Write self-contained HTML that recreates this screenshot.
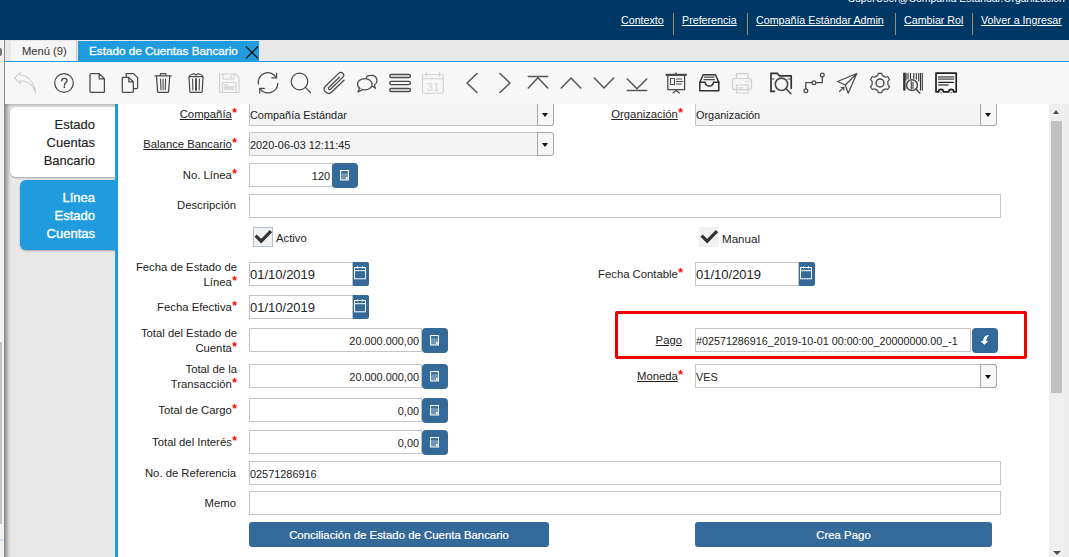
<!DOCTYPE html><html><head><meta charset="utf-8"><style>
*{box-sizing:border-box;margin:0;padding:0}
html,body{width:1069px;height:557px;overflow:hidden;background:#f2f2f2;font-family:"Liberation Sans",sans-serif;color:#333}
body>div,body>span,body>svg,.dd,.tri,.btn svg{position:absolute}
.hl{top:13px;font-size:10.7px;color:#fff;text-decoration:underline;white-space:nowrap;line-height:14px}
.hsep{top:13px;width:1px;height:22px;background:#9c8a6a}
.ic{top:73px;width:20px;height:20px;overflow:visible}
.ic *{fill:none;stroke:#444;stroke-width:1.4;stroke-linecap:round;stroke-linejoin:round}
.ic.dis *{stroke:#cfcfcf}
.lbl{font-size:11.3px;color:#222;white-space:nowrap;line-height:15px;text-align:right}
.req{color:#f00;font-weight:bold;font-size:12px;vertical-align:1px;margin-left:0.5px;line-height:0}
.lbl u{text-underline-offset:1px}
.fld{border:1px solid #c4c4c4;background:#fff;height:24px;font-size:10.9px;color:#222;line-height:24px;padding:0;white-space:nowrap;overflow:hidden}
.ro{background:#f4f4f4}
.num{text-align:right;padding-right:2px}
.btn{background:#346a99;border-radius:4px}
.pbtn{-webkit-text-stroke:0.2px #fff;background:#346a99;border-radius:3px;color:#fff;font-size:11.4px;text-align:center;line-height:27px;height:25px;white-space:nowrap}
.dd{border:1px solid #a8a8a8;background:#f6f6f6;width:17px;top:-1px;bottom:-1px;right:-1px;border-radius:0 3px 3px 0}
.tri{left:4px;width:0;height:0;border-left:3.5px solid transparent;border-right:3.5px solid transparent;border-top:4px solid #111}
.cb{width:20px;height:20px;background:#f1f1f1}
.wt{font-size:13px;line-height:18px;text-align:right;white-space:nowrap}
</style></head><body>
<div style="left:0;top:0;width:1069px;height:40px;background:#003865"></div>
<div style="left:848px;top:-8px;font-size:10.43px;color:#fff;white-space:nowrap;line-height:14px">SuperUser@Compañía Estándar.Organización</div>
<span class="hl" style="left:621px">Contexto</span>
<span class="hl" style="left:682px">Preferencia</span>
<span class="hl" style="left:756px">Compañía Estándar Admin</span>
<span class="hl" style="left:904px">Cambiar Rol</span>
<span class="hl" style="left:981px">Volver a Ingresar</span>
<div class="hsep" style="left:673px"></div>
<div class="hsep" style="left:747px"></div>
<div class="hsep" style="left:895px"></div>
<div class="hsep" style="left:972px"></div>
<div style="left:0;top:40px;width:4px;height:517px;background:#f2f2f2"></div>
<div style="left:0;top:48px;width:2px;height:8px;background:#777;border-radius:0 4px 4px 0"></div>
<div style="left:0;top:342px;width:2px;height:182px;background:#c4c4c4"></div>
<div style="left:0;top:539px;width:4px;height:2px;background:#cfe3f7"></div>
<div style="left:4px;top:40px;width:1px;height:517px;background:#8a8a8a"></div>
<div style="left:5px;top:40px;width:1064px;height:21px;background:#e8e8e8"></div>
<div style="left:11px;top:41px;width:66px;height:20px;background:#f5f5f5;border-right:1px solid #c8c8c8"></div>
<div style="left:22px;top:44px;font-size:11.2px;color:#333;white-space:nowrap;line-height:14px">Menú (9)</div>
<div style="left:78px;top:41px;width:181px;height:20px;background:#209bde"></div>
<div style="left:89px;top:44px;font-size:11.7px;color:#fff;white-space:nowrap;line-height:14px;-webkit-text-stroke:0.3px #fff">Estado de Cuentas Bancario</div>
<svg style="left:245px;top:46px" width="14" height="13" viewBox="0 0 14 13"><path d="M1 0.5L13 12.5M13 0.5L1 12.5" fill="none" stroke="#1a1a1a" stroke-width="1.3"/></svg>
<div style="left:5px;top:61px;width:1064px;height:1px;background:#209bde"></div>
<div style="left:5px;top:62px;width:1064px;height:42px;background:#f7f7f7;z-index:5"></div>
<svg style="left:0;top:0;z-index:6" width="1069" height="103" viewBox="0 0 1069 103">
<g fill="none" stroke="#4a4a4a" stroke-width="1.25" stroke-linecap="round" stroke-linejoin="round">
<!-- undo disabled -->
<path d="M20.3,72.6 L14.5,78 L20.3,83.5 L20.3,80.8 C26.5,80.5 33.5,84 35.4,93.4 C35.6,84.5 29,75.6 20.3,75.3 Z" stroke="#d0d0d0" stroke-width="1.1"/>
<!-- help -->
<circle cx="64" cy="83" r="9.3"/>
<path d="M61.7,80.8 C61.7,79.2 62.8,78.4 64.3,78.4 C65.9,78.4 67,79.4 67,80.6 C67,82.4 64.4,82.8 64.4,85.2" stroke-width="1.4"/>
<circle cx="64.4" cy="87.2" r="0.85" fill="#454545" stroke="none"/>
<!-- new -->
<path d="M90,74.5 Q90,73.6 91,73.6 L99.2,73.6 L104.4,78.8 L104.4,91.5 Q104.4,92.4 103.5,92.4 L91,92.4 Q90,92.4 90,91.5 Z M99.2,73.6 L99.2,78.8 L104.4,78.8"/>
<!-- copy -->
<path d="M126.2,76.8 L126.2,73.6 L133.5,73.6 L137.6,77.6 L137.6,87.8 Q137.6,88.5 136.8,88.5 L133.6,88.5"/>
<path d="M122.3,78.2 Q122.3,77.4 123.1,77.4 L128.8,77.4 L133.3,81.8 L133.3,91.6 Q133.3,92.4 132.5,92.4 L123.1,92.4 Q122.3,92.4 122.3,91.6 Z M128.8,77.4 L128.8,81.8 L133.3,81.8"/>
<!-- delete -->
<path d="M155,75.8 L171.2,75.8 M160.3,75.8 L160.3,74 Q160.3,73.5 160.8,73.5 L165.4,73.5 Q165.9,73.5 165.9,74 L165.9,75.8"/>
<path d="M156.5,76.5 L157.6,91.6 Q157.7,92.4 158.5,92.4 L167.7,92.4 Q168.5,92.4 168.6,91.6 L169.7,76.5"/>
<path d="M160.6,79 L160.9,89.8 M163.1,79 L163.1,89.8 M165.6,79 L165.3,89.8" stroke-width="1.1"/>
<!-- delete multiple -->
<path d="M189,77.5 Q189,75 191.5,74.5 L194,73.7 L196,75 L198,73.7 L200.5,74.5 Q203,75 203,77.5 L202.2,91.5 Q202.1,92.4 201.3,92.4 L190.8,92.4 Q190,92.4 189.9,91.5 Z M189.2,76.5 L202.8,76.5"/>
<path d="M192.6,79 L192.8,90 M196,79 L196,90 M199.4,79 L199.2,90" stroke-width="1.1"/>
<path d="M196,79 L196,90" stroke-width="1.8"/>
<!-- save disabled -->
<g stroke="#d2d2d2" stroke-width="1.1">
<path d="M219.5,74 L235.5,74 L239,77.5 L239,92.5 L219.5,92.5 Z"/>
<path d="M223,74 L223,79 L234,79 L234,74 M231,75.3 L231,77.6"/>
<rect x="222.5" y="82.5" width="13.5" height="10"/>
<path d="M224.5,84.8 L228,84.8 M224.5,87 L234,87 M224.5,89 L234,89" stroke-width="1.3"/>
</g>
<!-- refresh -->
<path d="M258.4,84 A9.6,9.6 0 0 1 276,77.2"/>
<path d="M276.6,73 L276.6,77.8 L271.8,77.8"/>
<path d="M277.8,83.3 A9.6,9.6 0 0 1 260.4,88.8"/>
<path d="M259.7,93 L259.7,88.4 L264.3,88.4"/>
<!-- search -->
<circle cx="299.5" cy="81.5" r="8.3"/>
<path d="M305.4,87.4 L310.5,92.5"/>
<!-- attach -->
<path d="M344,80.2 L331.4,92.3 Q328.6,95 325.5,92 Q322.6,89 325.4,86.2 L338.6,73.4 Q340.8,71.3 342.8,73.3 Q344.8,75.3 342.7,77.4 L330.8,89 Q329.7,90 328.8,89.1 Q328,88.2 329,87.2 L339.4,77.2"/>
<!-- chat -->
<path d="M371.5,75.5 C374.5,75.3 377,77.3 377,80.5 C377,82.5 375.8,84.2 374.3,85.2 L375.5,88.3 L372.4,86.3"/>
<path d="M366.2,77.8 C366.5,76.3 368.8,74.8 371.5,75.5"/>
<ellipse cx="364.8" cy="84.3" rx="7.3" ry="5.6" fill="#f7f7f7"/>
<path d="M359.5,88 L358,92 L362.5,89.6" fill="#f7f7f7"/>
<!-- grid -->
<g fill="#cccccc" stroke-width="1.3">
<rect x="389.7" y="74.3" width="20.8" height="3.4" rx="1.7"/>
<rect x="389.7" y="81.3" width="20.8" height="3.4" rx="1.7" fill="#f7f7f7"/>
<rect x="389.7" y="88.3" width="20.8" height="3.4" rx="1.7"/>
</g>
<!-- calendar disabled -->
<g stroke="#d4d4d4" stroke-width="1.1">
<rect x="422.5" y="74.5" width="20.8" height="18.7" rx="1.2"/>
<path d="M422.5,78.7 L443.3,78.7 M426.5,72.5 L426.5,76.3 M439.5,72.5 L439.5,76.3"/>
</g>
<text x="433" y="91" font-family="Liberation Sans" font-size="11.5" fill="#d8d8d8" stroke="none" text-anchor="middle">31</text>
<!-- nav -->
<g stroke-width="1.5" stroke="#555">
<path d="M477,73.5 L467,83 L477,92.5"/>
<path d="M500,73.5 L510,83 L500,92.5"/>
<path d="M528.3,76.4 L547.7,76.4 M528.3,88 L538,77.8 L547.7,88"/>
<path d="M561.3,88 L571,78 L580.7,88"/>
<path d="M594.3,78 L604,88 L613.7,78"/>
<path d="M627.3,79 L637,88.8 L646.7,79 M627.3,90.4 L646.7,90.4"/>
</g>
<!-- report -->
<path d="M666.5,74.8 L686,74.8" stroke-width="2.2"/>
<path d="M676.2,73.3 L676.2,74.5" stroke-width="1.6"/>
<path d="M667.8,75.5 L667.8,89.5 L684.6,89.5 L684.6,75.5"/>
<path d="M670.5,78.5 L674.5,78.5 L674.5,84.5 L670.5,84.5 Z" stroke-width="1.1"/>
<path d="M676.5,79 L681.5,79 M676.5,81.5 L683,81.5 M676.5,84 L681.5,84" stroke-width="1.1"/>
<path d="M676.2,89.5 L676.2,90.5 M673,93 L676.2,90.5 L679.4,93" stroke-width="1.1"/>
<!-- archive -->
<path d="M699.8,82.3 L703.3,74.8 L715.5,74.8 L718.8,82.3" stroke-width="1.5" stroke="#333"/>
<path d="M699.8,82.3 L699.8,90.8 L718.8,90.8 L718.8,82.3 L713.5,82.3 Q712.8,86 709.3,86 Q705.8,86 705.1,82.3 Z" stroke-width="1.5" stroke="#333"/>
<path d="M704.5,77.2 L714,77.2 M704,79.6 L714.5,79.6" stroke-width="1.3"/>
<!-- print disabled -->
<g stroke="#d0d0d0" stroke-width="1.2">
<path d="M736.5,78.5 L736.5,73.7 L748,73.7 L748,78.5"/>
<rect x="732.5" y="78.5" width="19" height="11" rx="2.2"/>
<rect x="736.5" y="85" width="11.5" height="8"/>
<path d="M738.5,87.8 L743,87.8 M738.5,90 L746,90"/>
<path d="M746,81.3 L746.8,81.3 M748.5,81.3 L749.3,81.3"/>
</g>
<!-- zoom across -->
<path d="M771,91.3 L771,73.3 L777.3,73.3 L779.3,75.8 L791.2,75.8 L791.2,88.3" stroke-width="1.7" stroke="#333"/>
<path d="M771,79 L774,79 M788,79 L791.2,79" stroke-width="1.2"/>
<path d="M771,91.3 L774.5,91.3" stroke-width="1.7" stroke="#333"/>
<circle cx="781.5" cy="84.3" r="6.2" stroke-width="1.6"/>
<path d="M786,88.8 L790.8,93.6" stroke-width="1.6"/>
<!-- workflow -->
<circle cx="805.8" cy="90.8" r="1.9"/>
<circle cx="814" cy="82.7" r="1.9"/>
<circle cx="822.3" cy="75" r="1.9"/>
<path d="M805.8,88.9 L805.8,82.7 L812.1,82.7 M815.9,82.7 L822.3,82.7 L822.3,76.9"/>
<!-- send -->
<path d="M856.8,73.5 L837.5,81.5 L845.3,85 L848.2,93.2 Z M845.3,85 L856.8,73.5" stroke-width="1.2"/>
<path d="M839.5,91.5 L843.8,87.2 M841,87.5 L844,87.2 L843.8,90" stroke-width="1.1"/>
<!-- settings -->
<path d="M878.2,73.3 L881.8,73.3 L882.4,75.6 Q884.2,76.2 885.4,77.2 L887.7,76.5 L889.5,79.6 L887.8,81.3 Q888.1,83 887.8,84.7 L889.5,86.4 L887.7,89.5 L885.4,88.8 Q884.2,89.8 882.4,90.4 L881.8,92.7 L878.2,92.7 L877.6,90.4 Q875.8,89.8 874.6,88.8 L872.3,89.5 L870.5,86.4 L872.2,84.7 Q871.9,83 872.2,81.3 L870.5,79.6 L872.3,76.5 L874.6,77.2 Q875.8,76.2 877.6,75.6 Z" stroke-width="1.2"/>
<circle cx="880" cy="83" r="4" stroke-width="1.5"/>
<!-- barcode -->
<path d="M903.7,73.3 L903.7,90 M906,73.3 L906,80 M908,73.3 L908,79 M910.5,73.3 L910.5,78.5 M913.8,73.3 L913.8,78.5 M916.3,73.3 L916.3,79 M918.7,73.3 L918.7,81 M922.3,73.3 L922.3,90 M920.5,73.3 L920.5,90" stroke-width="1.1" stroke="#333"/>
<path d="M904.8,73.3 L904.8,90" stroke-width="1.6" stroke="#333"/>
<circle cx="912" cy="85.2" r="5.4" stroke-width="1.5"/>
<path d="M911.3,81.5 L911.3,89 M913,82 L913,88.5" stroke-width="1.2"/>
<path d="M915.8,89 L919.8,93" stroke-width="1.5"/>
<!-- receipt -->
<path d="M936,91.8 L936,73.1 L956.2,73.1 L956.2,91.8 L953.6,91.8 A2.4,2.4 0 0 0 948.8,91.8 L943.4,91.8 A2.4,2.4 0 0 0 938.6,91.8 Z" stroke-width="1.7" stroke="#222"/>
<path d="M938.8,76.9 L953.5,76.9 M938.8,79.1 L953.5,79.1" stroke-width="1.8" stroke="#777"/>
<path d="M938.8,82.3 L953.5,82.3" stroke-width="1.2" stroke="#222"/>
<path d="M938.8,85 L948,85" stroke-width="1.6" stroke="#555"/>
<circle cx="941" cy="92.6" r="0.9" fill="#888" stroke="none"/><circle cx="951.2" cy="92.6" r="0.9" fill="#888" stroke="none"/>
</g>
</svg>

<div style="left:5px;top:103px;width:110px;height:454px;background:#e8e8e8;box-shadow:inset 4px 3px 4px -2px rgba(0,0,0,0.45)"></div>
<div style="left:10px;top:107px;width:108px;height:70px;background:#fff;border-radius:6px 0 0 6px;box-shadow:0 1px 2px rgba(0,0,0,0.3)"></div>
<div class="wt" style="left:10px;top:116px;width:85px;color:#222;-webkit-text-stroke:0.15px #222">Estado<br>Cuentas<br>Bancario</div>
<div style="left:20px;top:180px;width:98px;height:70px;background:#209bde;border-radius:6px 0 0 6px;box-shadow:0 1px 2px rgba(0,0,0,0.3)"></div>
<div class="wt" style="left:20px;top:189px;width:75px;color:#fff;-webkit-text-stroke:0.35px #fff">Línea<br>Estado<br>Cuentas</div>
<div style="left:118px;top:103px;width:931px;height:454px;background:#fff"></div>
<div style="left:115px;top:103px;width:3px;height:454px;background:#209bde"></div>
<div class="lbl" style="left:37px;width:200px;top:106.5px"><u>Compañía</u><span class="req">*</span></div>
<div class="fld ro" style="left:249px;top:98px;width:305px;height:28px;border-radius:0 3px 3px 0;overflow:visible;padding-top:4px;">Compañía Estándar<div class="dd"><div class="tri" style="top:14px"></div></div></div>
<div class="lbl" style="left:483px;width:200px;top:106.5px"><u>Organización</u><span class="req">*</span></div>
<div class="fld ro" style="left:695px;top:98px;width:302px;height:28px;border-radius:0 3px 3px 0;overflow:visible;padding-top:4px;">Organización<div class="dd"><div class="tri" style="top:14px"></div></div></div>
<div class="lbl" style="left:37px;width:200px;top:136.5px"><u>Balance Bancario</u><span class="req">*</span></div>
<div class="fld ro" style="left:249px;top:132px;width:305px;height:24px;border-radius:0 3px 3px 0;overflow:visible;padding-top:0px;">2020-06-03 12:11:45<div class="dd"><div class="tri" style="top:10px"></div></div></div>
<div class="lbl" style="left:37px;width:200px;top:167.5px">No. Línea<span class="req">*</span></div>
<div class="fld num" style="left:249px;top:163px;width:84px;height:24px;">120</div>
<div class="btn" style="left:332px;top:163px;width:26px;height:25px"><svg style="left:8px;top:6px" width="10" height="12" viewBox="0 0 10 12"><rect x="0.5" y="1.5" width="8" height="9.5" fill="rgba(255,255,255,0.3)" stroke="#fff" stroke-width="1"/><rect x="1" y="2.2" width="7" height="2" fill="#3a6d9c"/><rect x="6" y="8" width="1.6" height="2" fill="#fff"/></svg></div>
<div class="lbl" style="left:36px;width:200px;top:197.5px">Descripción</div>
<div class="fld " style="left:249px;top:194px;width:752px;height:24px;"></div>
<div class="cb" style="left:253px;top:227px;border:1px solid #b4c0cc"></div>
<svg style="left:253px;top:227px" width="20" height="20" viewBox="0 0 20 20"><path d="M2.6 8.6L8.2 14.2L18 4.2" fill="none" stroke="#333" stroke-width="3.2"/></svg>
<div class="lbl" style="left:276px;top:231px;text-align:left">Activo</div>
<div class="cb" style="left:699px;top:227px"></div>
<svg style="left:699px;top:227px" width="20" height="20" viewBox="0 0 20 20"><path d="M2.6 8.6L8.2 14.2L18 4.2" fill="none" stroke="#333" stroke-width="3.2"/></svg>
<div class="lbl" style="left:722px;top:231px;text-align:left;font-size:11.6px">Manual</div>
<div class="lbl" style="left:37px;width:200px;top:259.5px">Fecha de Estado de<br>Línea<span class="req">*</span></div>
<div class="fld " style="left:249px;top:262px;width:104px;height:24px;font-size:13px;">01/10/2019</div>
<div class="btn" style="left:353px;top:262px;width:16px;height:24px;border-radius:0 2px 2px 0"><svg style="left:1px;top:4px" width="13" height="14" viewBox="0 0 13 14"><rect x="0.5" y="1.5" width="11" height="11.3" fill="none" stroke="#fff" stroke-width="1"/><path d="M0.5,4.7H11.5M3.5,0.3V2.5M8.5,0.3V2.5" stroke="#fff" stroke-width="1"/></svg></div>
<div class="lbl" style="left:483px;width:200px;top:266.5px">Fecha Contable<span class="req">*</span></div>
<div class="fld " style="left:695px;top:262px;width:104px;height:24px;font-size:13px;">01/10/2019</div>
<div class="btn" style="left:799px;top:262px;width:16px;height:24px;border-radius:0 2px 2px 0"><svg style="left:1px;top:4px" width="13" height="14" viewBox="0 0 13 14"><rect x="0.5" y="1.5" width="11" height="11.3" fill="none" stroke="#fff" stroke-width="1"/><path d="M0.5,4.7H11.5M3.5,0.3V2.5M8.5,0.3V2.5" stroke="#fff" stroke-width="1"/></svg></div>
<div class="lbl" style="left:37px;width:200px;top:299.5px">Fecha Efectiva<span class="req">*</span></div>
<div class="fld " style="left:249px;top:295px;width:104px;height:24px;font-size:13px;">01/10/2019</div>
<div class="btn" style="left:353px;top:295px;width:16px;height:24px;border-radius:0 2px 2px 0"><svg style="left:1px;top:4px" width="13" height="14" viewBox="0 0 13 14"><rect x="0.5" y="1.5" width="11" height="11.3" fill="none" stroke="#fff" stroke-width="1"/><path d="M0.5,4.7H11.5M3.5,0.3V2.5M8.5,0.3V2.5" stroke="#fff" stroke-width="1"/></svg></div>
<div class="lbl" style="left:37px;width:200px;top:325.5px">Total del Estado de<br>Cuenta<span class="req">*</span></div>
<div class="fld num" style="left:249px;top:328px;width:173px;height:24px;">20.000.000,00</div>
<div class="btn" style="left:422px;top:328px;width:26px;height:25px"><svg style="left:8px;top:6px" width="10" height="12" viewBox="0 0 10 12"><rect x="0.5" y="1.5" width="8" height="9.5" fill="rgba(255,255,255,0.3)" stroke="#fff" stroke-width="1"/><rect x="1" y="2.2" width="7" height="2" fill="#3a6d9c"/><rect x="6" y="8" width="1.6" height="2" fill="#fff"/></svg></div>
<div class="lbl" style="left:37px;width:200px;top:361.5px">Total de la<br>Transacción<span class="req">*</span></div>
<div class="fld num" style="left:249px;top:364px;width:173px;height:24px;">20.000.000,00</div>
<div class="btn" style="left:422px;top:364px;width:26px;height:25px"><svg style="left:8px;top:6px" width="10" height="12" viewBox="0 0 10 12"><rect x="0.5" y="1.5" width="8" height="9.5" fill="rgba(255,255,255,0.3)" stroke="#fff" stroke-width="1"/><rect x="1" y="2.2" width="7" height="2" fill="#3a6d9c"/><rect x="6" y="8" width="1.6" height="2" fill="#fff"/></svg></div>
<div class="lbl" style="left:37px;width:200px;top:402.5px">Total de Cargo<span class="req">*</span></div>
<div class="fld num" style="left:249px;top:398px;width:173px;height:24px;">0,00</div>
<div class="btn" style="left:422px;top:398px;width:26px;height:25px"><svg style="left:8px;top:6px" width="10" height="12" viewBox="0 0 10 12"><rect x="0.5" y="1.5" width="8" height="9.5" fill="rgba(255,255,255,0.3)" stroke="#fff" stroke-width="1"/><rect x="1" y="2.2" width="7" height="2" fill="#3a6d9c"/><rect x="6" y="8" width="1.6" height="2" fill="#fff"/></svg></div>
<div class="lbl" style="left:37px;width:200px;top:434.5px">Total del Interés<span class="req">*</span></div>
<div class="fld num" style="left:249px;top:430px;width:173px;height:24px;">0,00</div>
<div class="btn" style="left:422px;top:430px;width:26px;height:25px"><svg style="left:8px;top:6px" width="10" height="12" viewBox="0 0 10 12"><rect x="0.5" y="1.5" width="8" height="9.5" fill="rgba(255,255,255,0.3)" stroke="#fff" stroke-width="1"/><rect x="1" y="2.2" width="7" height="2" fill="#3a6d9c"/><rect x="6" y="8" width="1.6" height="2" fill="#fff"/></svg></div>
<div style="left:615px;top:311px;width:412px;height:48px;border:3px solid #ee0000;border-radius:2px"></div>
<div class="lbl" style="left:482px;width:200px;top:332.5px"><u>Pago</u></div>
<div class="fld " style="left:695px;top:328px;width:276px;height:24px;font-size:10.75px;">#02571286916_2019-10-01 00:00:00_20000000.00_-1</div>
<div class="btn" style="left:972px;top:328px;width:26px;height:25px"><svg style="left:7px;top:6px" width="12" height="12" viewBox="0 0 12 12"><path d="M10.3,1.3 C7,1 4.3,2.5 4.3,6.8 L1.7,7.2 L5.4,10.7 L9.1,7.2 L7.3,7.1 C7.2,4.5 8.5,2.5 10.3,1.3 Z" fill="#fff"/></svg></div>
<div class="lbl" style="left:483px;width:200px;top:368.5px"><u>Moneda</u><span class="req">*</span></div>
<div class="fld " style="left:695px;top:364px;width:302px;height:24px;border-radius:0 3px 3px 0;overflow:visible;padding-top:0px;">VES<div class="dd"><div class="tri" style="top:10px"></div></div></div>
<div class="lbl" style="left:36px;width:200px;top:465.5px">No. de Referencia</div>
<div class="fld " style="left:249px;top:461px;width:752px;height:24px;">02571286916</div>
<div class="lbl" style="left:36px;width:200px;top:495.5px">Memo</div>
<div class="fld " style="left:249px;top:491px;width:752px;height:24px;"></div>
<div class="pbtn" style="left:249px;top:522px;width:300px">Conciliación de Estado de Cuenta Bancario</div>
<div class="pbtn" style="left:695px;top:522px;width:297px">Crea Pago</div>
<div style="left:1049px;top:103px;width:15px;height:454px;background:#efefef"></div>
<div style="left:1064px;top:103px;width:5px;height:454px;background:#ededed"></div>
<div style="left:1051px;top:121px;width:11px;height:272px;background:#c1c1c1"></div>
<div class="tri" style="left:1053px;top:110px;border-top:none;border-bottom:4px solid #505050;border-left-width:3.5px;border-right-width:3.5px"></div>
<div class="tri" style="left:1052.5px;top:551px;border-top:4px solid #505050;border-left-width:4px;border-right-width:4px"></div>
</body></html>
